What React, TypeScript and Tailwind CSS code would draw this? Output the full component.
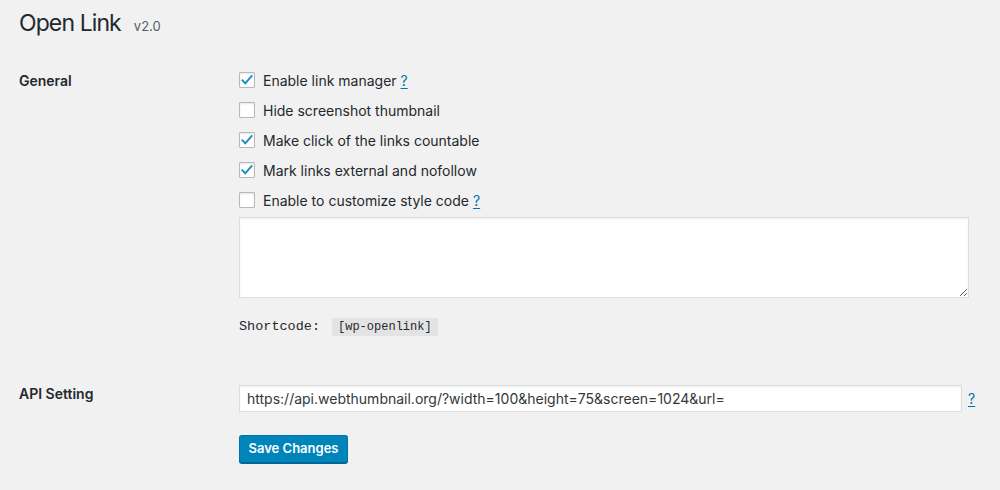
// Open Link settings page — WordPress admin look

const options = [
  { label: "Enable link manager", checked: true, help: true },
  { label: "Hide screenshot thumbnail", checked: false, help: false },
  { label: "Make click of the links countable", checked: true, help: false },
  { label: "Mark links external and nofollow", checked: true, help: false },
  { label: "Enable to customize style code", checked: false, help: true },
];

function Checkbox({ checked }: { checked: boolean }) {
  return (
    <span className="flex h-[16px] w-[16px] shrink-0 items-center justify-center rounded-[1px] border border-[#b4b9be] bg-white shadow-[inset_0_1px_2px_rgba(0,0,0,0.1)]">
      {checked && (
        <svg width="14" height="14" viewBox="0 0 20 20" className="-mt-[1px]">
          <path
            d="M3.5 10.5l4 4.2L16.5 4.5"
            fill="none"
            stroke="#1e8cbe"
            strokeWidth="2.8"
            strokeLinecap="square"
          />
        </svg>
      )}
    </span>
  );
}

function Help() {
  return (
    <a className="ml-[4px] text-[#0073aa] underline underline-offset-2" href="#">
      ?
    </a>
  );
}

export default function App() {
  return (
    <div className="min-h-[490px] bg-[#f1f1f1] pl-[19px] pr-[31px] pt-[9px] font-['Inter',sans-serif] text-[#23282d]">
      {/* Header */}
      <h1 className="flex items-baseline gap-[13px] text-[23px] font-normal leading-[29px] tracking-[-0.9px]">
        Open Link
        <span className="text-[13px] tracking-normal text-[#555d66]">v2.0</span>
      </h1>

      <div className="mt-[24px] grid grid-cols-[220px_minmax(0,1fr)]">
        {/* General */}
        <div className="pt-[6px] text-[14px] font-semibold leading-[20px]">General</div>
        <div>
          <ul>
            {options.map((o) => (
              <li key={o.label} className="flex h-[30px] items-center gap-[8px] text-[14px]">
                <Checkbox checked={o.checked} />
                <span>
                  {o.label}
                  {o.help && <Help />}
                </span>
              </li>
            ))}
          </ul>
          <textarea className="mt-[2px] block h-[81px] w-[730px] border border-[#ddd] bg-white shadow-[inset_0_1px_2px_rgba(0,0,0,0.07)] outline-none" />
          <div className="mt-[20px] flex items-center font-['Liberation_Mono',monospace] text-[13.5px] leading-[18px]">
            Shortcode:
            <code className="ml-[12px] bg-[#e3e3e3] px-[6px] text-[12px] leading-[18px]">[wp-openlink]</code>
          </div>
        </div>

        {/* API Setting */}
        <div className="mt-[48px] text-[14px] font-semibold leading-[20px]">API Setting</div>
        <div className="mt-[49px]">
          <div className="flex items-center">
            <input
              className="h-[27px] w-[723px] shrink-0 border border-[#ddd] bg-white px-[7px] text-[14px] text-[#32373c] shadow-[inset_0_1px_2px_rgba(0,0,0,0.07)] outline-none"
              defaultValue="https://api.webthumbnail.org/?width=100&height=75&screen=1024&url="
            />
            <a className="ml-[6px] text-[14px] text-[#0073aa] underline underline-offset-2" href="#">
              ?
            </a>
          </div>
          <button className="mt-[23px] h-[28px] w-[109px] rounded-[3px] border border-[#0073aa] border-b-[#006799] bg-[#0085ba] text-[13px] font-semibold text-white shadow-[0_1px_0_#006799]">
            Save Changes
          </button>
        </div>
      </div>
    </div>
  );
}
